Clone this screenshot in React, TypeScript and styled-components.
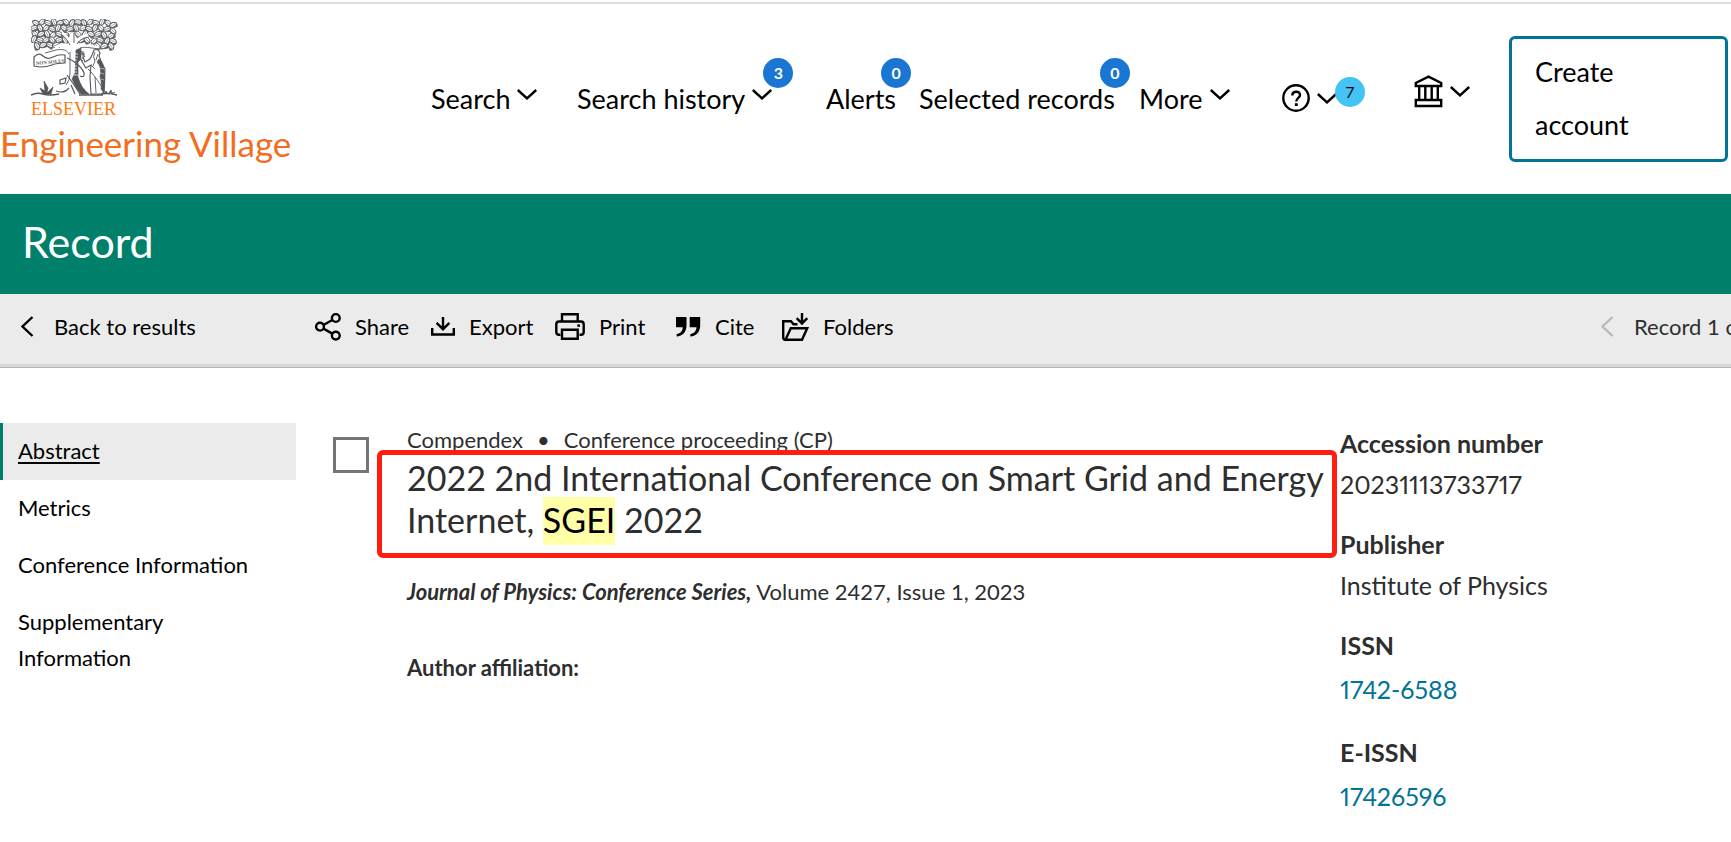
import React from "react";
import styled, { createGlobalStyle, css } from "styled-components";

const colors = {
  ink: "#2e2e2e",
  green: "#007f6b",
  teal: "#007398",
  orange: "#f36d21",
  blue: "#1976d2",
  sky: "#44c4f5",
  grey: "#ebebeb",
  mark: "#ffffa8",
  red: "#ff1f12",
};

const GlobalStyle = createGlobalStyle`
  * { box-sizing: border-box; }
  body {
    margin: 0;
    background: #fff;
    color: ${colors.ink};
    font-family: Lato, "Open Sans", sans-serif;
    font-size: 22px;
    line-height: 34px;
    overflow-x: hidden;
  }
  h1, h2, p, dl, dd, ul { margin: 0; padding: 0; }
  button { font: inherit; color: inherit; background: none; border: 0; padding: 0; cursor: pointer; }
  a { color: inherit; text-decoration: none; }
  svg { display: block; flex: none; }
`;

/* ---------- Header ---------- */

const TopRule = styled.div`
  height: 4px;
  border-bottom: 2px solid #dcdcdc;
`;

const Header = styled.header`
  display: flex;
  align-items: center;
  justify-content: space-between;
  min-height: 190px;
  padding-right: 3px;
  color: #000;
  font-size: 27px;
  line-height: 53px;
`;

const Brand = styled.a`
  display: flex;
  flex-direction: column;
  align-self: flex-start;
  padding-top: 15px;
`;

const Publisher = styled.span`
  display: flex;
  flex-direction: column;
  width: 86px;
  margin-left: 31px;
  color: #ff7a0f;
  font-family: "Liberation Serif", serif;
  font-size: 18px;
  line-height: 24px;
  white-space: nowrap;
`;

const Product = styled.span`
  color: ${colors.orange};
  font-size: 35px;
  line-height: 44px;
  white-space: nowrap;
`;

const HeaderEnd = styled.div`
  display: flex;
  align-items: center;
`;

const MainNav = styled.nav`
  display: grid;
  grid-template-columns: 146px 249px 93px 220px 143px 132px 95px;
  justify-items: start;
  align-items: center;
  padding-bottom: 2px;
`;

const NavButton = styled.button<{ $raised?: boolean }>`
  position: relative;
  display: flex;
  align-items: center;
  gap: 7px;
  white-space: nowrap;
  ${(p) => p.$raised && css`padding-bottom: 14px;`}
`;

const RaisedIcon = styled.span`
  padding-bottom: 8px;
`;

const Badge = styled.span<{ $place: "label" | "menu" | "help" }>`
  position: absolute;
  top: -14px;
  right: ${(p) => (p.$place === "label" ? "-15px" : "-21px")};
  width: 30px;
  height: 30px;
  border-radius: 50%;
  background: ${colors.blue};
  color: #fff;
  font-size: 16px;
  font-weight: 700;
  line-height: 29px;
  text-align: center;
  ${(p) =>
    p.$place === "help" &&
    css`
      top: -7px;
      right: -28px;
      background: ${colors.sky};
      color: #000;
      font-weight: 400;
    `}
`;

const CreateAccount = styled.button`
  width: 219px;
  padding: 6px 24px 8px 23px;
  border: 3px solid ${colors.teal};
  border-radius: 6px;
  text-align: left;
`;

/* ---------- Title band and toolbar ---------- */

const Band = styled.div`
  display: flex;
  align-items: center;
  min-height: 100px;
  padding: 0 22px 4px;
  background: ${colors.green};
  color: #fff;
`;

const BandTitle = styled.h1`
  font-size: 43px;
  font-weight: 400;
  line-height: 54px;
`;

const Toolbar = styled.div`
  display: flex;
  align-items: center;
  min-height: 74px;
  padding: 0 0 8px 20px;
  background: ${colors.grey};
  border-bottom: 1px solid #b4b4b4;
  box-shadow: inset 0 -3px 0 #d8d8d8;
  color: #000;
  white-space: nowrap;
`;

const BackLink = styled.a`
  display: flex;
  align-items: center;
  gap: 20px;
  width: 295px;
`;

const Actions = styled.div`
  display: grid;
  grid-template-columns: 116px 124px 121px 106px auto;
  justify-content: start;
  flex: 1;
`;

const Action = styled.button`
  display: flex;
  align-items: center;
  gap: 14px;
`;

const Pager = styled.div`
  display: flex;
  align-items: center;
  gap: 20px;
  width: 131px;
  overflow: hidden;
  color: ${colors.ink};
`;

const PagerButton = styled.button`
  color: #b9b9b9;
`;

/* ---------- Record ---------- */

const Main = styled.main`
  display: flex;
  align-items: flex-start;
  padding: 55px 0 48px;
`;

const SideNav = styled.nav`
  width: 296px;
  flex: none;
  color: #000;
`;

const SideLink = styled.a<{ $current?: boolean }>`
  display: block;
  padding: 10px 0 11px 15px;
  border-left: 3px solid ${(p) => (p.$current ? colors.green : "transparent")};
  background: ${(p) => (p.$current ? colors.grey : "transparent")};
  line-height: 36px;
  ${(p) =>
    p.$current &&
    css`
      text-decoration: underline;
      text-decoration-thickness: 2px;
      text-underline-offset: 3px;
    `}
`;

const SelectBox = styled.input`
  appearance: none;
  flex: none;
  width: 36px;
  height: 36px;
  margin: 14px 38px 0 37px;
  border: 3px solid #757575;
  background: #fff;
  &:checked { background: ${colors.teal}; }
`;

const Article = styled.article`
  flex: 1;
  min-width: 0;
  margin-right: 8px;
`;

const Source = styled.p`
  display: flex;
  gap: 14px;
`;

const TitleFrame = styled.div`
  position: relative;
  &::after {
    content: "";
    position: absolute;
    inset: -7px -5px -17px -30px;
    border: 5px solid ${colors.red};
    border-radius: 6px;
    pointer-events: none;
  }
`;

const RecordTitle = styled.h2`
  font-size: 34px;
  font-weight: 400;
  line-height: 42px;
`;

const Highlight = styled.mark`
  padding: 2px 0 5px;
  background: ${colors.mark};
  color: #000;
`;

const Citation = styled.p`
  margin-top: 34px;
`;

const Journal = styled.em`
  font-weight: 700;
`;

const Affiliation = styled.p`
  margin-top: 42px;
  font-weight: 700;
`;

const Facts = styled.dl`
  width: 391px;
  flex: none;
  font-size: 25px;
  line-height: 41px;
`;

const FactName = styled.dt`
  font-weight: 700;
`;

const FactValue = styled.dd<{ $link?: boolean }>`
  margin-bottom: 19px;
  font-variant-numeric: proportional-nums;
  ${(p) => p.$link && css`color: ${colors.teal}; line-height: 47px;`}
`;

/* ---------- Icons ---------- */

const stroke = { fill: "none", stroke: "currentColor", strokeWidth: 2.4 } as const;

const ChevronDown = () => (
  <svg width="20" height="11" viewBox="0 0 20 11" {...stroke} aria-hidden="true">
    <path d="M.8 1 10 9.4 19.200 1" />
  </svg>
);

const ChevronLeft = () => (
  <svg width="14" height="21" viewBox="0 0 14 21" {...stroke} aria-hidden="true">
    <path d="M12.500 1 2.500 10.500 12.500 20" />
  </svg>
);

const HelpIcon = () => (
  <svg width="28" height="28" viewBox="0 0 28 28" {...stroke} aria-hidden="true">
    <circle cx="14" cy="14" r="12.700" />
    <path d="M10.300 11.400C10.300 8.900 12 7.700 14.200 7.700S18 9 18 11.200C18 14 14.300 14 14.300 17.500" />
    <path d="M14.300 19.200V22" strokeWidth="2.900" />
  </svg>
);

const InstitutionIcon = () => (
  <svg width="29" height="33" viewBox="0 0 29 33" {...stroke} aria-hidden="true">
    <path d="M1.800 11V8L14.500 1.700 27.200 8V11Z" />
    <path d="M5.200 11V25M11.300 11V25M17.700 11V25M23.800 11V25" />
    <path d="M1.800 31V25H27.200V31Z" />
  </svg>
);

const ShareIcon = () => (
  <svg width="26" height="28" viewBox="0 0 26 28" {...stroke} aria-hidden="true">
    <circle cx="5" cy="13.700" r="3.900" />
    <circle cx="20.800" cy="5" r="3.900" />
    <circle cx="20.800" cy="22.600" r="3.900" />
    <path d="M8.500 12 17.300 7M8.500 15.600 17.300 20.600" />
  </svg>
);

const ExportIcon = () => (
  <svg width="24" height="19" viewBox="0 0 24 19" {...stroke} aria-hidden="true">
    <path d="M12 0V12M5.600 5.800 12 12.200 18.400 5.800M1.200 11V17.500H22.800V11" />
  </svg>
);

const PrintIcon = () => (
  <svg width="30" height="27" viewBox="0 0 30 27" {...stroke} aria-hidden="true">
    <path d="M7 8.500V1.200H22.700V8.500" />
    <path d="M5.500 21.800H4Q1.300 21.800 1.300 19V11.300Q1.300 8.500 4 8.500H26Q28.700 8.500 28.700 11.300V19Q28.700 21.800 26 21.800H24.500" />
    <path d="M7 16.700H22.700V25.700H7Z" />
    <path d="M22.300 12.600H25" />
  </svg>
);

const CiteIcon = () => (
  <svg width="25" height="20" viewBox="0 0 25 20" fill="currentColor" aria-hidden="true">
    <path d="M0 0H10.500V8C10.500 15 6.700 19.300.6 19.500V17.300C4.600 16.500 6.600 14 6.800 10.300H0Z" />
    <path d="M13.700 0H24.200V8C24.200 15 20.400 19.300 14.300 19.500V17.300C18.300 16.500 20.300 14 20.500 10.300H13.700Z" />
  </svg>
);

const FolderIcon = () => (
  <svg width="27" height="28" viewBox="0 0 27 28" {...stroke} aria-hidden="true">
    <path d="M3.500 26.700Q1.200 26.700 1.200 24.500V8.300H9L11.500 11.200H15.500" />
    <path d="M3.500 26.700 8.800 15.200H25.200L20 26.700Z" />
    <path d="M20 0V10.500M14.700 5.200 20 10.600 25.300 5.200" />
  </svg>
);

/* Rows of engraved leaves: each entry is [x, y, angle]. */
const leaves: [number, number, number][] = [
  [5, 4, 30], [11, 3, -50], [17, 4, 20], [23, 3, 70], [29, 4, -30], [35, 3, 40], [41, 4, -60], [47, 3, 10],
  [53, 4, 60], [59, 3, -40], [65, 4, 20], [71, 3, -70], [77, 4, 35], [82, 6, -30],
  [3, 9, -20], [9, 9, 60], [15, 9, -40], [21, 10, 15], [27, 9, -65], [33, 9, 35], [39, 10, -10], [45, 9, 70],
  [52, 9, -35], [58, 10, 25], [64, 9, -60], [70, 9, 45], [76, 10, -15], [82, 12, 50],
  [4, 15, 40], [10, 15, -30], [16, 15, 65], [22, 16, -45], [28, 15, 20], [34, 16, -20], [47, 15, 40],
  [54, 15, -60], [60, 15, 30], [67, 15, -20], [73, 16, 60], [80, 17, -35],
  [3, 20, -60], [9, 21, 15], [15, 21, -35], [21, 21, 50], [28, 21, -15], [34, 21, 60], [50, 21, -30],
  [56, 21, 50], [63, 22, -45], [69, 21, 10], [76, 22, -60], [82, 22, 30],
  [6, 27, 60], [12, 26, -30], [19, 26, 25], [25, 26, -20], [66, 27, 40], [73, 27, -25], [80, 27, 55],
];

const TreeLogo = () => (
  <svg width="87" height="78" viewBox="0 0 87 78" fill="none" stroke="#53565a" strokeWidth=".9" aria-hidden="true">
    {leaves.map(([x, y, a], i) => (
      <g key={i} transform={`translate(${x} ${y}) rotate(${a})`}>
        <path d="M-4 0Q-2-3 0-2.300Q2-3 4 0Q2 3 0 2Q-2 3-4 0Z" fill="#fff" />
        <path d="M-3 0H2.500" strokeWidth=".5" />
        <path d="M-1 2.500 2 2.800 4 1 3 3.500Z" fill="#53565a" strokeWidth=".6" />
      </g>
    ))}
    <path d="M42 34V16M40 30C37 24 31 25 24 29M41 26C38 20 35 17 31 14M44 26C46 20 51 17 57 16M46 30C52 26 60 27 68 29" stroke="#fff" strokeWidth="3" />
    <path d="M38 35C35 30 30 30 25 31L14 34M39 26C37 22 34 18 30 15M43 24V14M46 25C49 20 53 19 58 18M49 29C55 27 62 30 72 30" />
    <path d="M39 33V55Q39 61 35 66" />
    <path d="M45 31 50 29V40L47 43V58Q50 69 58 75H50Q44 68 41 60L44 54Z" fill="#53565a" strokeWidth=".6" />
    <path d="M43 35H47M43 38H47M43 41H46M43 44H46M43 47H46M43 50H46M43 53H46M43 56H47" stroke="#fff" strokeWidth=".8" />
    <path d="M36 39C42 41 51 48 53 54Q54 59 49 57M36 56Q42 64 49 75M29 61 35 59 34 64 29 65ZM25 72Q33 75 38 69M40 66 44 75" strokeWidth="1.200" />
    <path d="M3 38Q8 33 12 37T22 38Q28 35 34 36V44Q26 44 21 46T9 48L3 47Z" fill="#fff" strokeWidth="1.200" />
    <text x="5" y="46" transform="rotate(-5 5 46)" fontSize="5" fontWeight="700" fontFamily="Liberation Serif, serif" fill="#53565a" stroke="none">NON SOLUS</text>
    <path d="M50 41 55 49 60 46 59 58 60 75H71L73 73 74 50 70 42 68 37 69 34Q67 29 63 31L61 36 59 40 54 43 52 38" fill="#fff" strokeWidth="1.100" />
    <path d="M68 40Q76 46 73 74L70 70Q71 62 69 58 71 48 66 43Z" fill="#53565a" strokeWidth=".6" />
    <path d="M68 49 73 50M69 54 73 55M70 60 73 61" stroke="#fff" strokeWidth=".5" />
    <path d="M64 33Q61 38 64 42L62 47M67 35 65 41M57 50Q62 54 71 68M64 58 65 74M60 46 64 50" />
    <path d="M48 33V39L52 42M50 32 54 38M52 32V40M48 35H54" strokeWidth="1" />
    <path d="M0 76Q6 73 12 75T28 75M48 76H72M70 75Q78 74 86 76" strokeWidth="1.400" />
    <path d="M12 75 9 69 14 72 13 62 17 69 16 74 22 68 20 75ZM73 75 75 72 77 75 80 71 81 75 84 73" fill="#53565a" strokeWidth=".7" />
  </svg>
);

/* ---------- Data ---------- */

const actions = [
  { label: "Share", icon: <ShareIcon /> },
  { label: "Export", icon: <ExportIcon /> },
  { label: "Print", icon: <PrintIcon /> },
  { label: "Cite", icon: <CiteIcon /> },
  { label: "Folders", icon: <FolderIcon /> },
];

const facts = [
  { name: "Accession number", value: "20231113733717" },
  { name: "Publisher", value: "Institute of Physics" },
  { name: "ISSN", value: "1742-6588", link: true },
  { name: "E-ISSN", value: "17426596", link: true },
];

const MenuMark = () => (
  <RaisedIcon>
    <ChevronDown />
  </RaisedIcon>
);

export default function App() {
  return (
    <>
      <GlobalStyle />
      <TopRule />
      <Header>
        <Brand href="#">
          <Publisher>
            <TreeLogo />
            ELSEVIER
          </Publisher>
          <Product>Engineering Village</Product>
        </Brand>
        <HeaderEnd>
          <MainNav aria-label="Main">
            <NavButton>Search<MenuMark /></NavButton>
            <NavButton>Search history<MenuMark /><Badge $place="menu">3</Badge></NavButton>
            <NavButton>Alerts<Badge $place="label">0</Badge></NavButton>
            <NavButton>Selected records<Badge $place="label">0</Badge></NavButton>
            <NavButton>More<MenuMark /></NavButton>
            <NavButton aria-label="Help"><HelpIcon /><ChevronDown /><Badge $place="help">7</Badge></NavButton>
            <NavButton aria-label="Institution" $raised><InstitutionIcon /><ChevronDown /></NavButton>
          </MainNav>
          <CreateAccount>Create account</CreateAccount>
        </HeaderEnd>
      </Header>

      <Band>
        <BandTitle>Record</BandTitle>
      </Band>

      <Toolbar>
        <BackLink href="#results"><ChevronLeft />Back to results</BackLink>
        <Actions>
          {actions.map((a) => (
            <Action key={a.label}>{a.icon}{a.label}</Action>
          ))}
        </Actions>
        <Pager>
          <PagerButton aria-label="Previous record"><ChevronLeft /></PagerButton>
          <span>Record 1 of</span>
        </Pager>
      </Toolbar>

      <Main>
        <SideNav aria-label="Record sections">
          <SideLink href="#abstract" $current>Abstract</SideLink>
          <SideLink href="#metrics">Metrics</SideLink>
          <SideLink href="#conference">Conference Information</SideLink>
          <SideLink href="#supplementary">Supplementary<br />Information</SideLink>
        </SideNav>
        <SelectBox type="checkbox" aria-label="Select record" />
        <Article>
          <Source>
            <span>Compendex</span>
            <span>•</span>
            <span>Conference proceeding (CP)</span>
          </Source>
          <TitleFrame>
            <RecordTitle>
              2022 2nd International Conference on Smart Grid and Energy Internet, <Highlight>SGEI</Highlight> 2022
            </RecordTitle>
          </TitleFrame>
          <Citation>
            <Journal>Journal of Physics: Conference Series,</Journal> Volume 2427, Issue 1, 2023
          </Citation>
          <Affiliation>Author affiliation:</Affiliation>
        </Article>
        <Facts>
          {facts.map((f) => (
            <React.Fragment key={f.name}>
              <FactName>{f.name}</FactName>
              <FactValue $link={f.link}>{f.link ? <a href={`#${f.value}`}>{f.value}</a> : f.value}</FactValue>
            </React.Fragment>
          ))}
        </Facts>
      </Main>
    </>
  );
}
